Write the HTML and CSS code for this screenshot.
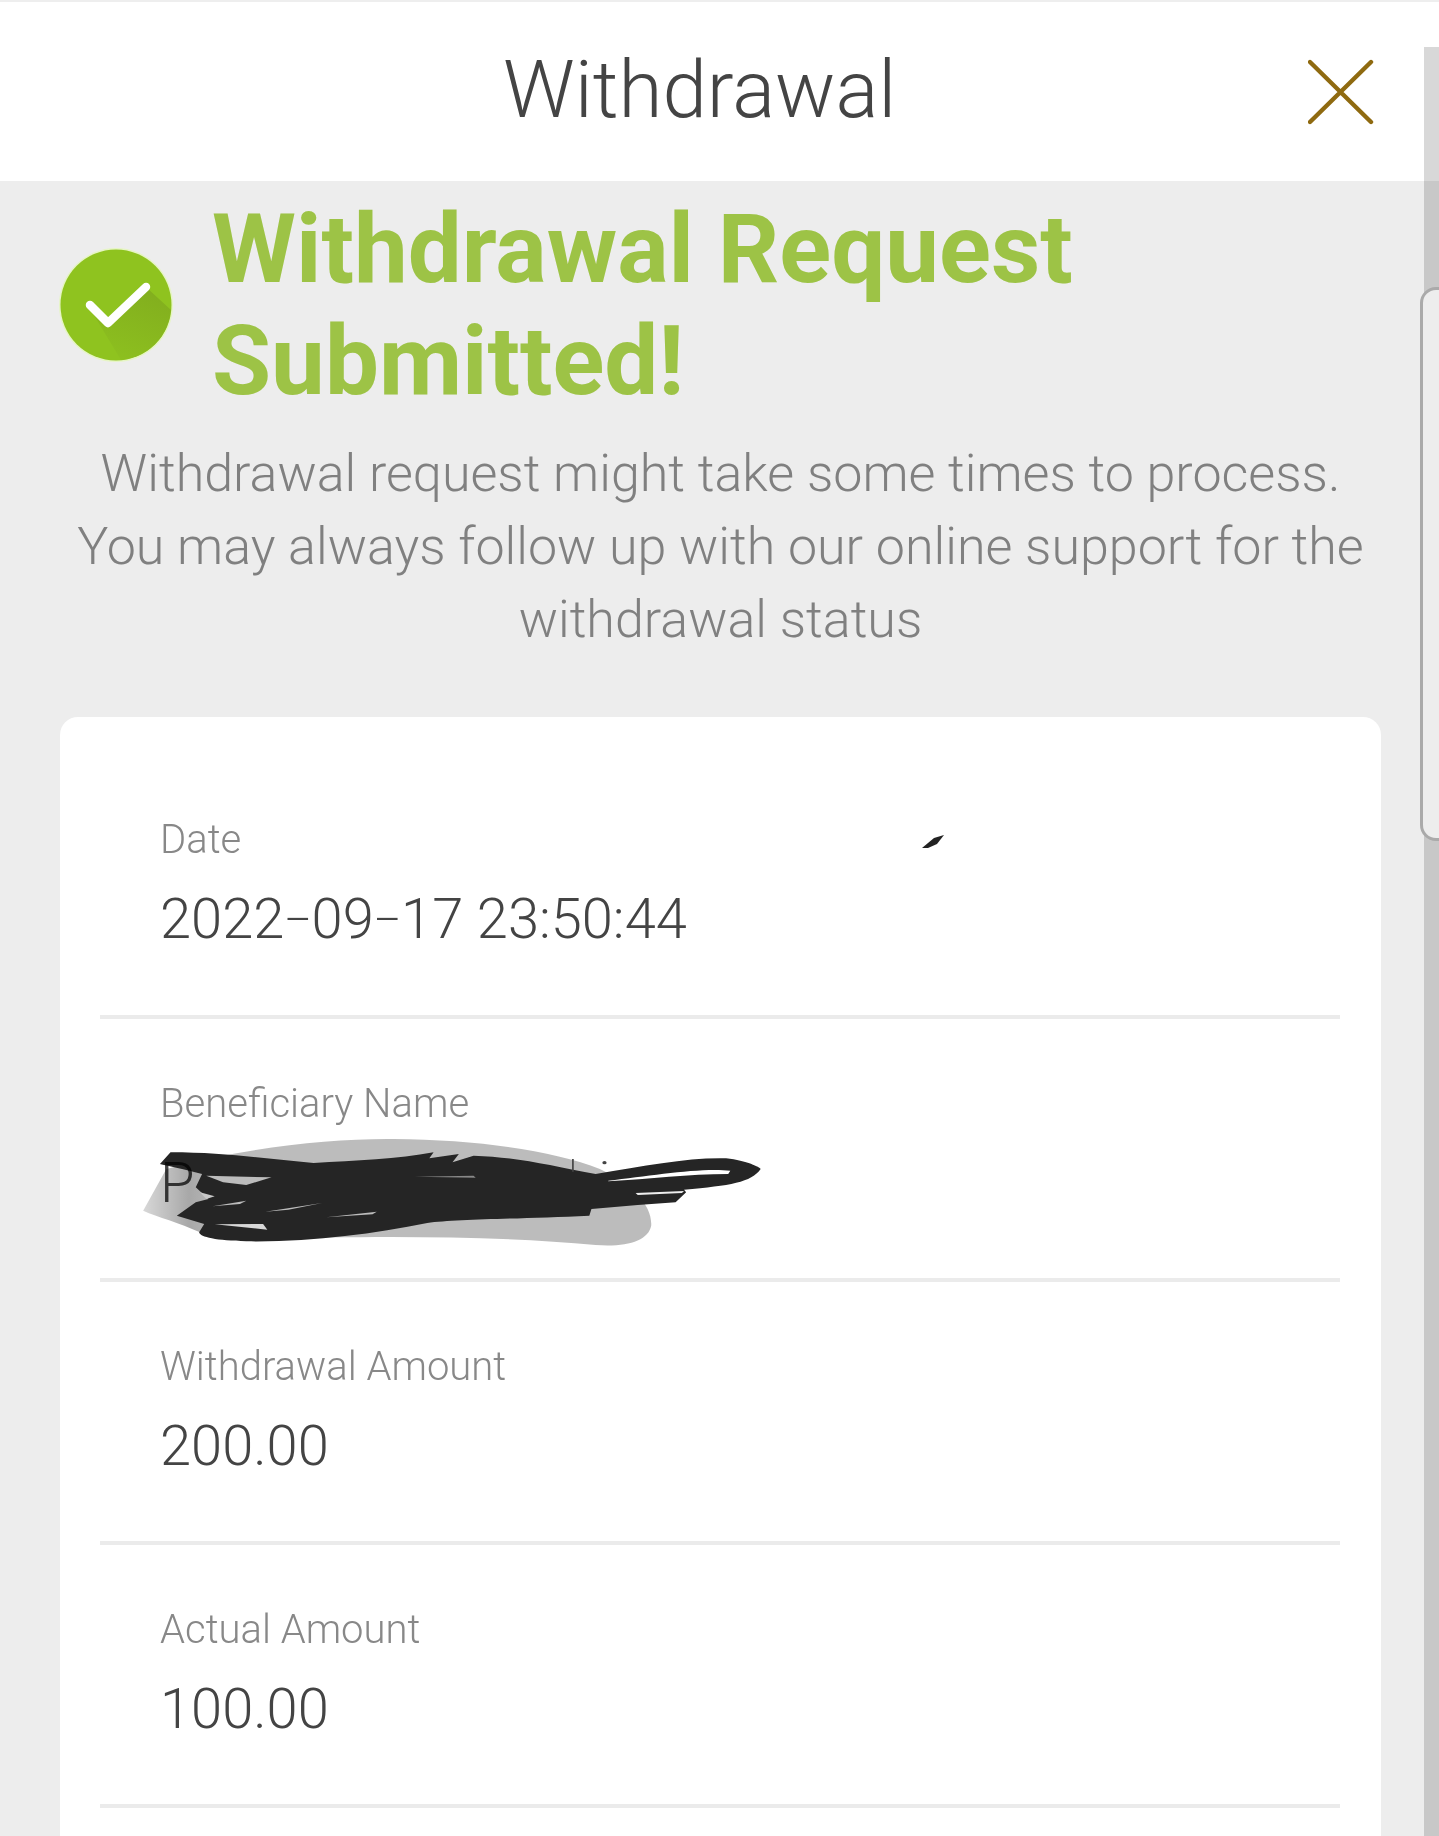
FILE: index.html
```html
<!DOCTYPE html>
<html>
<head>
  <meta charset="utf-8">
  <title>Withdrawal</title>
  <link rel="stylesheet" href="styles.css">
</head>
<body>
  <div class="page">
    <div class="header">
      <h1 class="title">Withdrawal</h1>
      <svg class="close" viewBox="0 0 66 66">
        <path d="M2 3L63 63M63 3L2 63" fill="none" stroke="#8f6a10" stroke-width="4.4" stroke-linecap="round"/>
      </svg>
    </div>

    <div class="content">
      <div class="result">
        <svg class="check" viewBox="0 0 114 114">
          <defs>
            <linearGradient id="checkShade" x1="0.75" x2="0.3" y1="0" y2="1">
              <stop offset="0" stop-color="#82ae1e"/>
              <stop offset="1" stop-color="#8dc01f"/>
            </linearGradient>
          </defs>
          <circle cx="57" cy="57" r="57" fill="#e6f5c4"/>
          <circle cx="57" cy="57" r="55.5" fill="#8fc31f"/>
          <path d="M30 59L49 76L87 39L112 62A55 55 0 0 1 62 112Z" fill="url(#checkShade)"/>
          <path d="M31 57L49 75L87 39" fill="none" stroke="#fff" stroke-width="8.5" stroke-linecap="round" stroke-linejoin="round"/>
        </svg>
        <h2 class="heading">Withdrawal Request Submitted!</h2>
      </div>

      <p class="message">Withdrawal request might take some times to process.<br>You may always follow up with our online support for the<br>withdrawal status</p>

      <div class="card">
        <div class="row">
          <div class="label">Date</div>
          <div class="value">2022<span class="dash">–</span>09<span class="dash">–</span>17 23:50:44</div>
          <svg class="speck" viewBox="0 0 22 14"><path d="M0 13L12 3L22 0L15 9L6 13Z" fill="#222"/></svg>
        </div>
        <div class="row">
          <div class="label">Beneficiary Name</div>
          <div class="value">P</div>
          <svg class="scribble" viewBox="0 0 1568 540" preserveAspectRatio="none">
            <defs>
              <linearGradient id="blobFade" x1="0" x2="1" y1="0" y2="0">
                <stop offset="0" stop-color="#d8d8d8"/>
                <stop offset="0.09" stop-color="#a8a8a8"/>
                <stop offset="0.16" stop-color="#bcbcbc"/>
                <stop offset="1" stop-color="#bcbcbc"/>
              </linearGradient>
            </defs>
            <path d="M55 275L110 150C300 85 500 58 650 60C850 62 1030 95 1140 150C1220 200 1265 260 1262 320C1255 365 1205 385 1130 378C900 350 600 350 350 360L190 340C140 310 90 295 55 275Z" fill="url(#blobFade)"/>
            <path d="M95 135L120 100C250 100 350 120 460 132C560 125 660 120 745 100L735 118L805 105L790 130L840 110C950 115 1020 140 1130 165C1250 140 1350 115 1440 118C1490 125 1520 145 1522 150C1500 190 1450 200 1340 212L1345 220L1320 250L1230 258L1120 270L1115 290C950 300 800 300 730 312C600 345 450 370 300 367C230 365 190 355 188 340L200 315L135 290L180 250L210 240L180 205L195 165C150 150 110 140 95 135Z" fill="#252525"/>
            <path d="M1160 185C1260 170 1380 145 1450 155L1445 165C1350 165 1260 180 1160 187Z" fill="#fff"/>
            <path d="M1225 222L1340 216L1335 222L1230 228Z" fill="#eee"/>
            <path d="M205 170L360 175L300 198L245 190Z" fill="#bcbcbc"/>
            <path d="M190 220L225 232L205 240Z" fill="#c8c8c8"/>
            <path d="M220 262L300 245L285 255Z" fill="#bcbcbc"/>
            <path d="M345 278L480 252L400 272Z" fill="#bcbcbc"/>
            <path d="M490 295L610 278L600 286Z" fill="#bcbcbc"/>
            <path d="M225 316L340 315L350 332Z" fill="#d8d8d8"/>
            <path d="M700 173L840 170L845 176Z" fill="#888"/>
            <path d="M1076 120V158" stroke="#444" stroke-width="4"/>
            <circle cx="1151" cy="131" r="5" fill="#444"/>
          </svg>
        </div>
        <div class="row">
          <div class="label">Withdrawal Amount</div>
          <div class="value">200.00</div>
        </div>
        <div class="row">
          <div class="label">Actual Amount</div>
          <div class="value">100.00</div>
        </div>
      </div>
    </div>

    <div class="gutter"></div>
    <div class="gutter-tab"></div>
  </div>
</body>
</html>
```

FILE: styles.css
```css
html, body {
  margin: 0;
  padding: 0;
}

body {
  font-family: Roboto, Arial, sans-serif;
  background-color: #ededed;
}

.page {
  position: relative;
  height: 1836px;
  overflow: hidden;
}

.header {
  display: flex;
  align-items: center;
  box-sizing: border-box;
  height: 181px;
  padding: 0 64px 0 503px;
  background-color: #fff;
  border-top: 2px solid #eee;
}

.title {
  flex: 1;
  margin: 0 0 3px;
  font-size: 80px;
  font-weight: 300;
  color: #444;
}

.close {
  width: 66px;
  height: 66px;
  margin-right: 1px;
}

.content {
  padding: 12px 58px 0 60px;
}

.result {
  display: flex;
  align-items: center;
  gap: 39px;
}

.check {
  flex: none;
  width: 114px;
  height: 114px;
  margin-left: -1px;
}

.heading {
  margin: 0;
  width: 900px;
  font-size: 96px;
  line-height: 112px;
  font-weight: 700;
  color: #9dc346;
}

.message {
  margin: 20px 0 0;
  font-size: 52px;
  line-height: 73px;
  font-weight: 300;
  text-align: center;
  color: #808080;
}

.card {
  margin-top: 61px;
  padding: 0 41px 80px 40px;
  background-color: #fff;
  border-radius: 18px;
}

.row {
  position: relative;
  box-sizing: border-box;
  height: 263px;
  padding: 63px 0 0 60px;
  border-bottom: 4px solid #ebebeb;
}

.row:first-child {
  height: 302px;
  padding-top: 101px;
}

.label {
  font-size: 40px;
  line-height: 44px;
  font-weight: 300;
  color: #888;
}

.value {
  margin-top: 24px;
  font-size: 56px;
  line-height: 66px;
  font-weight: 300;
  color: #444;
}

/* the dashes in the date are shorter than a normal en dash */
.dash {
  font-size: 42px;
  line-height: 0;
  vertical-align: 4px;
}

.speck {
  position: absolute;
  left: 822px;
  top: 118px;
  width: 22px;
  height: 14px;
}

.scribble {
  position: absolute;
  left: 20px;
  top: 100px;
  width: 660px;
  height: 180px;
  mix-blend-mode: multiply;
}

.gutter {
  position: absolute;
  top: 47px;
  right: 0;
  bottom: 0;
  width: 15px;
  background: linear-gradient(#d8d8d8 134px, #c8c8c8 134px);
}

.gutter-tab {
  position: absolute;
  top: 287px;
  right: -16px;
  box-sizing: border-box;
  width: 35px;
  height: 554px;
  background-color: #ededed;
  border: 3px solid #aaa;
  border-radius: 16px;
}
```
